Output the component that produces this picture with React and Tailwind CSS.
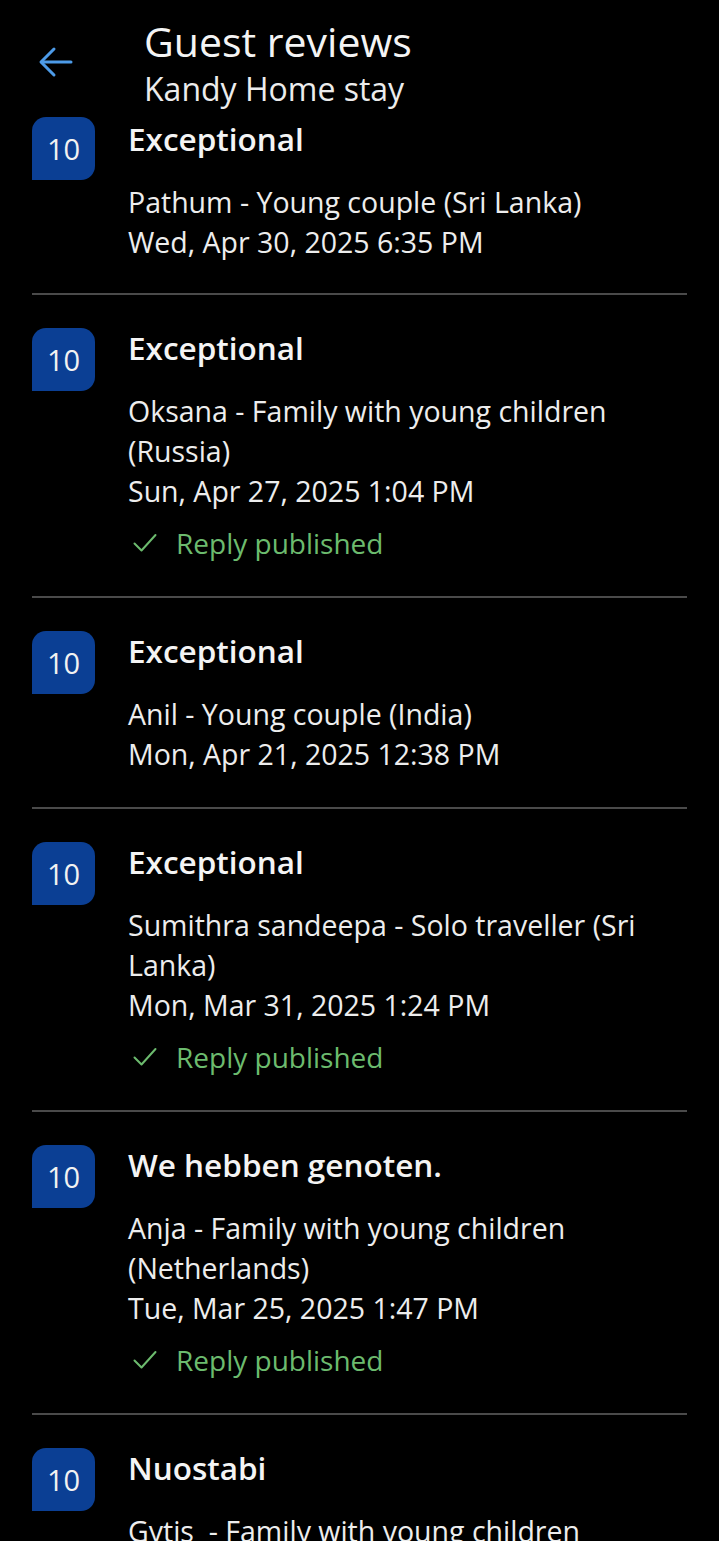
import React from 'react';

const reviews = [
  {
    title: 'Exceptional',
    guest: 'Pathum - Young couple (Sri Lanka)',
    date: 'Wed, Apr 30, 2025 6:35 PM',
    replied: false,
  },
  {
    title: 'Exceptional',
    guest: 'Oksana - Family with young children (Russia)',
    date: 'Sun, Apr 27, 2025 1:04 PM',
    replied: true,
  },
  {
    title: 'Exceptional',
    guest: 'Anil - Young couple (India)',
    date: 'Mon, Apr 21, 2025 12:38 PM',
    replied: false,
  },
  {
    title: 'Exceptional',
    guest: 'Sumithra sandeepa - Solo traveller (Sri Lanka)',
    date: 'Mon, Mar 31, 2025 1:24 PM',
    replied: true,
  },
  {
    title: 'We hebben genoten.',
    guest: 'Anja - Family with young children (Netherlands)',
    date: 'Tue, Mar 25, 2025 1:47 PM',
    replied: true,
  },
  {
    title: 'Nuostabi',
    guest: 'Gytis \u00a0- Family with young children (Lithuania)',
    date: 'Sat, Mar 22, 2025 9:12 AM',
    replied: false,
  },
];

const ScoreBadge = ({ score }) => (
  <div className="w-[63px] h-[63px] shrink-0 bg-[#0b3f94] rounded-t-[14px] rounded-br-[14px] flex items-center justify-center text-[29px] text-[#f2f2f2]">
    {score}
  </div>
);

const ReviewItem = ({ review, first, last }) => (
  <div className={`flex gap-[33px] ${first ? 'pt-[9px] pb-[31px]' : 'pt-[33px] pb-[33px]'} ${last ? '' : 'border-b-2 border-[#4a4a4a]'}`}>
    <ScoreBadge score={10} />
    <div className={`flex-1 ${first ? 'pt-[4px]' : 'pt-[2px]'}`}>
      <div className="text-[31.5px] leading-[36px] font-semibold text-[#f4f4f4]">{review.title}</div>
      <div className="mt-[25px] text-[28.5px] leading-[40px] text-[#ededed]">
        <div>{review.guest}</div>
        <div>{review.date}</div>
      </div>
      {review.replied && (
        <div className="mt-[12px] flex items-center h-[40px] text-[28px] text-[#6cbb6e]">
          <svg width="24" height="20" viewBox="0 0 24 20" className="ml-[5px] mr-[19px]" fill="none" stroke="#6cbb6e" strokeWidth="2" strokeLinecap="round" strokeLinejoin="round">
            <path d="M1.5 10.5 L8.5 17.5 L22.5 2" />
          </svg>
          <span>Reply published</span>
        </div>
      )}
    </div>
  </div>
);

export default function App() {
  return (
    <div className="w-[719px] h-[1541px] overflow-hidden bg-black font-['Open_Sans',sans-serif]">
      {/* Header */}
      <div className="h-[108px] flex items-start">
        <div className="w-[144px] pl-[38px] pt-[45px]">
          <svg width="36" height="34" viewBox="0 0 36 34" fill="none" stroke="#4d9be8" strokeWidth="3" strokeLinecap="round" strokeLinejoin="round">
            <path d="M33 17 H4" />
            <path d="M16 4 L3 17 L16 30" />
          </svg>
        </div>
        <div className="pt-[17px]">
          <div className="text-[41px] leading-[48px] text-[#f4f4f4]">Guest reviews</div>
          <div className="mt-[5px] text-[32px] leading-[38px] text-[#ececec]">Kandy Home stay</div>
        </div>
      </div>

      {/* Reviews */}
      <div className="px-8">
        {reviews.map((r, i) => (
          <ReviewItem key={i} review={r} first={i === 0} last={i === reviews.length - 1} />
        ))}
      </div>
    </div>
  );
}
